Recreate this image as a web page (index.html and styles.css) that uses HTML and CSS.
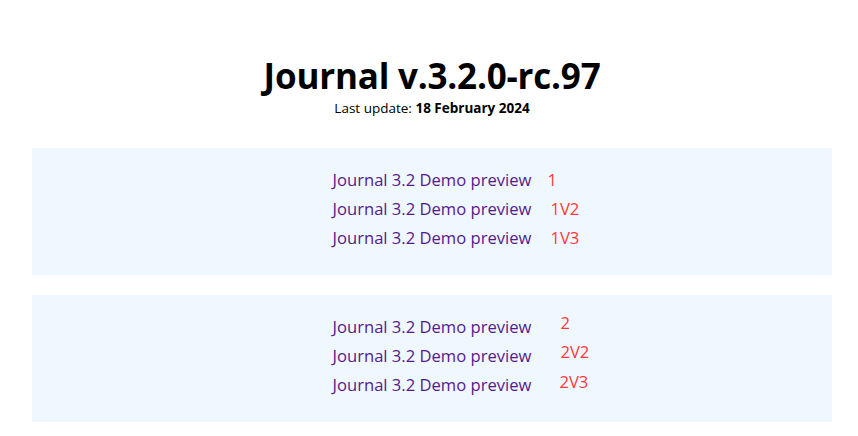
FILE: index.html
```html
<!DOCTYPE html>
<html>
<head>
<meta charset="utf-8">
<link rel="stylesheet" href="styles.css">
</head>
<body>
<div class="page">
  <header class="head">
    <h1 class="title">Journal v.3.2.0-rc.97</h1>
    <p class="update">Last update: <b>18 February 2024</b></p>
  </header>
  <section class="box">
    <div class="row"><a class="link" href="#">Journal 3.2 Demo preview</a><span class="tag t1">1</span></div>
    <div class="row"><a class="link" href="#">Journal 3.2 Demo preview</a><span class="tag t2">1V2</span></div>
    <div class="row"><a class="link" href="#">Journal 3.2 Demo preview</a><span class="tag t2">1V3</span></div>
  </section>
  <section class="box">
    <div class="row"><a class="link" href="#">Journal 3.2 Demo preview</a><span class="tag t3">2</span></div>
    <div class="row"><a class="link" href="#">Journal 3.2 Demo preview</a><span class="tag t3">2V2</span></div>
    <div class="row"><a class="link" href="#">Journal 3.2 Demo preview</a><span class="tag t4">2V3</span></div>
  </section>
</div>
</body>
</html>
```
FILE: styles.css
```css
html, body {
  margin: 0;
  padding: 0;
  background: #ffffff;
}
body {
  font-family: "Open Sans", "Noto Sans", "Liberation Sans", sans-serif;
  color: #000;
}
.page {
  padding: 52px 26px 0 32px;
  display: flex;
  flex-direction: column;
  gap: 20px;
}
.head {
  text-align: center;
  margin-bottom: 12px;
}
.title {
  margin: 0;
  font-size: 35px;
  line-height: 48px;
  font-weight: 700;
  letter-spacing: -0.2px;
}
.update {
  margin: 0;
  font-size: 13.5px;
  line-height: 16px;
}
.box {
  background: #eff7ff;
  height: 127px;
  box-sizing: border-box;
  padding: 20px 0 0;
  display: flex;
  flex-direction: column;
  align-items: center;
}
.row {
  height: 29px;
  position: relative;
  font-size: 16.6px;
  line-height: 24px;
}
.link {
  color: #551a8b;
  text-decoration: none;
}
.tag {
  color: #ff3838;
  position: absolute;
  top: 0;
  left: 100%;
  white-space: nowrap;
}
.t1 { margin-left: 16px; }
.t2 { margin-left: 19px; }
.t3 { margin-left: 29px; top: -4px; }
.t4 { margin-left: 28px; top: -3px; }
```
